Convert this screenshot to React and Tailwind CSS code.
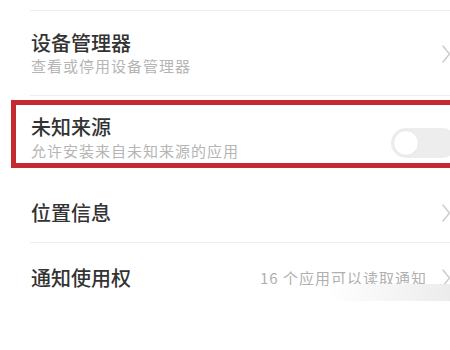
import React from "react";

const font = { fontFamily: '"Noto Sans CJK SC", "Noto Sans", sans-serif' };

function Chevron() {
  return (
    <svg width="10" height="20" viewBox="0 0 10 20" className="shrink-0">
      <path d="M2 2 L8.5 10 L2 18" fill="none" stroke="#cccccc" strokeWidth="1.5" strokeLinecap="round" strokeLinejoin="round" />
    </svg>
  );
}

export default function App() {
  return (
    <div className="relative w-[450px] h-[350px] overflow-hidden bg-white" style={font}>
      {/* top separator */}
      <div className="h-[10px]" />
      <div className="ml-[30px] h-px bg-[#eeeeee]" />

      {/* 设备管理器 */}
      <div className="ml-[30px] pl-px flex items-center pt-[20px] pb-[19px] border-b border-[#eeeeee]">
        <div className="flex flex-col">
          <div className="text-[20px] leading-[24px] font-medium text-[#333333]">设备管理器</div>
          <div className="mt-px text-[15px] leading-[20px] tracking-[1px] text-[#b5b5b5]">查看或停用设备管理器</div>
        </div>
        <div className="ml-auto mr-[-1px]">
          <Chevron />
        </div>
      </div>

      {/* 未知来源 highlighted */}
      <div className="mt-[4px] ml-[11px] w-[460px] border-[5px] border-[#c42a2f] flex pl-[15px] pt-[10px] pb-[2px]">
        <div className="flex flex-col">
          <div className="text-[20px] leading-[24px] font-medium text-[#333333]">未知来源</div>
          <div className="mt-[2px] text-[15px] leading-[20px] tracking-[1px] text-[#b5b5b5]">允许安装来自未知来源的应用</div>
        </div>
        <div className="ml-[152px] mt-[13px] w-[66px] h-[30px] rounded-full bg-[#ededed] flex items-center pl-[2px]">
          <div className="w-[26px] h-[26px] rounded-full bg-white border border-[#e6e6e6]" />
        </div>
      </div>

      {/* 位置信息 */}
      <div className="ml-[30px] pl-px flex items-center pt-[33px] pb-[17px] border-b border-[#eeeeee]">
        <div className="text-[20px] leading-[24px] font-medium text-[#333333]">位置信息</div>
        <div className="ml-auto mr-[-1px]">
          <Chevron />
        </div>
      </div>

      {/* 通知使用权 */}
      <div className="ml-[30px] pl-px flex items-center pt-[23px]">
        <div className="text-[20px] leading-[24px] font-medium text-[#333333]">通知使用权</div>
        <div className="ml-auto text-[15px] leading-[20px] tracking-[1px] text-[#b0b0b0]">16 个应用可以读取通知</div>
        <div className="ml-[14px] mr-[-1px]">
          <Chevron />
        </div>
      </div>

      {/* watermark smudge */}
      <div className="absolute left-[328px] top-[284px] w-[122px] h-[17px] bg-gradient-to-r from-white to-[#ececec]" />
    </div>
  );
}
